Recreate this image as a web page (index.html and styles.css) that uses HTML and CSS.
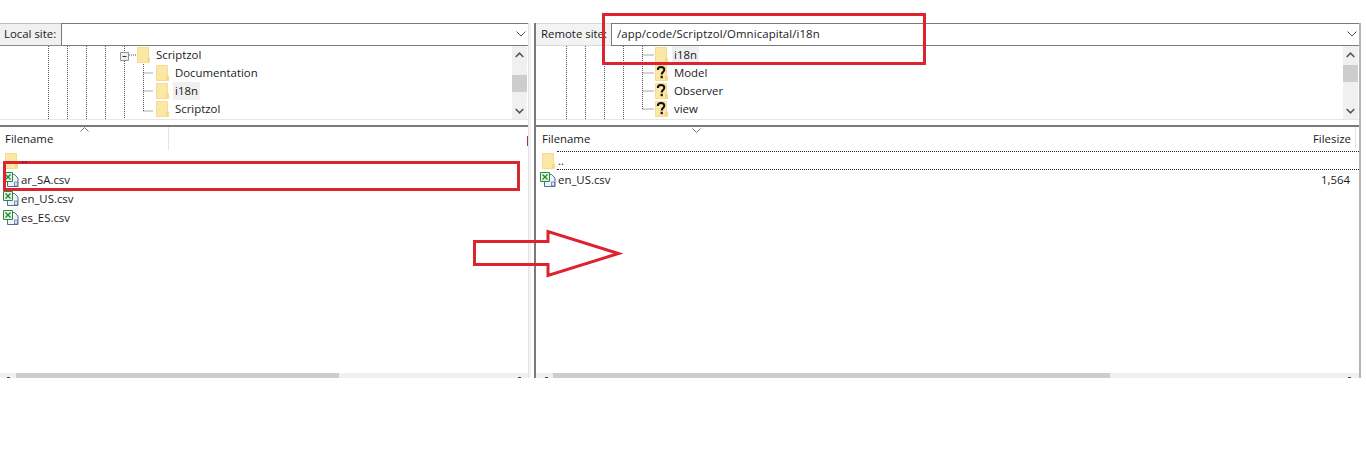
FILE: index.html
```html
<!DOCTYPE html>
<html lang="en">
<head>
<meta charset="utf-8">
<title>FileZilla site panes</title>
<link rel="stylesheet" href="styles.css">
</head>
<body>
<svg class="defs" width="0" height="0" aria-hidden="true">
  <defs>
    <symbol id="folder" viewBox="0 0 13 16">
      <path d="M.5.5h11v10.500h1v4.500H.5z" fill="#fce8a4" stroke="#f2dc96"/>
      <path d="M10 11h2.500v4.500H10z" fill="#f8da7e"/>
    </symbol>
    <symbol id="unknown" viewBox="0 0 13 16">
      <path d="M.5.5h11v10.500h1v4.500H.5z" fill="#fce8a4" stroke="#f2dc96"/>
      <path d="M10 11h2.500v4.500H10z" fill="#f8da7e"/>
      <path d="M2.800 5C2.800 3 4.300 2 6 2c1.900 0 3.300 1 3.300 2.700 0 2.300-2.600 2.300-2.600 4.800" fill="none" stroke="#111" stroke-width="2"/>
      <path d="M5.600 10.800h2.200v2.400H5.600z" fill="#111"/>
    </symbol>
    <symbol id="sheet" viewBox="0 0 16 15">
      <path d="M4.500 2.500h7l3.500 3.500v8.500H4.500z" fill="#eef4fa" stroke="#4f6f96"/>
      <path d="M11.500 10h3v4h-3z" fill="#d5e4f2" stroke="#4f6f96" stroke-width=".7"/>
      <path d="M.5.500h9v9h-9z" fill="#e6f3e2" stroke="#2a8a3a"/>
      <path d="M2.500 2.500l5 5M7.500 2.500l-5 5" stroke="#1f8a35" stroke-width="1.300"/>
    </symbol>
  </defs>
</svg>

<main class="panes">
  <section class="pane pane-local">
    <header class="sitebar">
      <span class="site-label">Local site:</span>
      <div class="site-input">
        <span class="site-path"></span>
        <svg class="chev" width="10" height="6" viewBox="0 0 10 6"><path d="M.5.500L5 5 9.500.500" fill="none" stroke="#555"/></svg>
      </div>
    </header>
    <div class="tree">
      <svg class="guides" width="512" height="73" aria-hidden="true">
        <path d="M48.500 0v73M67.500 0v73M86.500 0v73M105.500 0v73M124.500 0v7M124.500 15v58M143.500 18v47M143.500 27h10M143.500 45h10M143.500 65h10M129 9h7" fill="none" stroke="#555" stroke-dasharray="1 1"/>
        <path d="M120.500 6.500h8v8h-8z" fill="#eef0f2" stroke="#8b95a0"/>
        <path d="M122.500 10.500h4" stroke="#333"/>
      </svg>
      <div class="tree-body">
        <div class="node node-a"><svg class="fi" width="13" height="16"><use href="#folder"/></svg><span class="name">Scriptzol</span></div>
        <div class="node node-b"><svg class="fi" width="13" height="16"><use href="#folder"/></svg><span class="name">Documentation</span></div>
        <div class="node node-b"><svg class="fi" width="13" height="16"><use href="#folder"/></svg><span class="name sel">i18n</span></div>
        <div class="node node-b"><svg class="fi" width="13" height="16"><use href="#folder"/></svg><span class="name">Scriptzol</span></div>
      </div>
      <div class="vscroll">
        <svg class="arrow" width="9" height="6" viewBox="0 0 9 6"><path d="M.700 5L4.500 1.200 8.300 5" fill="none" stroke="#555" stroke-width="1.600"/></svg>
        <div class="thumb thumb-l"></div>
        <svg class="arrow" width="9" height="6" viewBox="0 0 9 6"><path d="M.700 1L4.500 4.800 8.300 1" fill="none" stroke="#555" stroke-width="1.600"/></svg>
      </div>
    </div>
    <div class="gap"></div>
    <div class="list">
      <div class="list-head">
        <span class="col-name col-sep">Filename</span>
        <span class="col-end"></span>
        <svg class="sort sort-l" width="9" height="5" viewBox="0 0 9 5"><path d="M.500 4.500L4.500.500l4 4" fill="none" stroke="#777"/></svg>
      </div>
      <div class="rows">
        <div class="row"><svg class="fi updir" width="13" height="16"><use href="#folder"/></svg><span class="fname dots dots-over">..</span></div>
        <div class="row"><svg class="fi" width="16" height="15"><use href="#sheet"/></svg><span class="fname">ar_SA.csv</span></div>
        <div class="row"><svg class="fi" width="16" height="15"><use href="#sheet"/></svg><span class="fname">en_US.csv</span></div>
        <div class="row"><svg class="fi" width="16" height="15"><use href="#sheet"/></svg><span class="fname">es_ES.csv</span></div>
      </div>
      <div class="hscroll hscroll-l"><div class="hthumb"></div></div>
    </div>
  </section>

  <div class="splitter"></div>

  <section class="pane pane-remote">
    <header class="sitebar">
      <span class="site-label site-label-r">Remote site:</span>
      <div class="site-input">
        <span class="site-path">/app/code/Scriptzol/Omnicapital/i18n</span>
        <svg class="chev" width="10" height="6" viewBox="0 0 10 6"><path d="M.500.500L5 5 9.500.500" fill="none" stroke="#555"/></svg>
      </div>
    </header>
    <div class="tree">
      <svg class="guides" width="512" height="73" aria-hidden="true">
        <path d="M30.500 0v73M49.500 0v73M68.500 0v73M87.500 0v73M106.500 0v63M106.500 9h11M106.500 27h11M106.500 45h11M106.500 63h11" fill="none" stroke="#555" stroke-dasharray="1 1"/>
      </svg>
      <div class="tree-body">
        <div class="node node-r"><svg class="fi" width="13" height="16"><use href="#folder"/></svg><span class="name sel">i18n</span></div>
        <div class="node node-r"><svg class="fi" width="13" height="16"><use href="#unknown"/></svg><span class="name">Model</span></div>
        <div class="node node-r"><svg class="fi" width="13" height="16"><use href="#unknown"/></svg><span class="name">Observer</span></div>
        <div class="node node-r"><svg class="fi" width="13" height="16"><use href="#unknown"/></svg><span class="name">view</span></div>
      </div>
      <div class="vscroll">
        <svg class="arrow" width="9" height="6" viewBox="0 0 9 6"><path d="M.700 5L4.500 1.200 8.300 5" fill="none" stroke="#555" stroke-width="1.600"/></svg>
        <div class="thumb thumb-r"></div>
        <svg class="arrow" width="9" height="6" viewBox="0 0 9 6"><path d="M.700 1L4.500 4.800 8.300 1" fill="none" stroke="#555" stroke-width="1.600"/></svg>
      </div>
    </div>
    <div class="gap"></div>
    <div class="list">
      <div class="list-head">
        <span class="col-name">Filename</span>
        <span class="col-size">Filesize</span>
        <svg class="sort sort-r" width="9" height="5" viewBox="0 0 9 5"><path d="M.500.500l4 4 4-4" fill="none" stroke="#777"/></svg>
      </div>
      <div class="rows">
        <div class="row"><svg class="fi updir" width="13" height="16"><use href="#folder"/></svg><span class="fname dots focus">..</span></div>
        <div class="row"><svg class="fi" width="16" height="15"><use href="#sheet"/></svg><span class="fname">en_US.csv</span><span class="fsize">1,564</span></div>
      </div>
      <div class="hscroll hscroll-r"><div class="hthumb"></div></div>
    </div>
  </section>
</main>

<div class="mark mark-path"></div>
<div class="mark mark-file"></div>
<svg class="mark-arrow" width="154" height="52" viewBox="0 0 154 52" aria-hidden="true">
  <path d="M1.500 13.500H75V3.500L145.500 25.500 75 47.500V36.500H1.500z" fill="none" stroke="#dc2430" stroke-width="3"/>
</svg>
</body>
</html>
```
FILE: styles.css
```css
* { box-sizing: border-box; }
html, body { margin: 0; padding: 0; height: 455px; overflow: hidden; background: #fff; }
body { position: relative; font: 11.4px/18px "Open Sans", "Noto Sans", "Liberation Sans", sans-serif; color: #1a1a1a; }
.defs { position: absolute; }

.panes { display: flex; width: 1361px; padding-top: 23px; }
.pane { display: flex; flex-direction: column; height: 355px; }
.pane-local { width: 528px; }
.pane-remote { flex: 1; border-left: 2px solid #7a7a7a; border-right: 2px solid #b5b5b5; }
.splitter { width: 6px; background: linear-gradient(90deg, #e4e4e4 0 1px, #f3f3f3 1px 3px, #fff 3px 6px); }

.sitebar { display: flex; height: 23px; flex: none; }
.site-label { width: 61px; padding: 1px 0 0 4px; background: #f0f0f0; border-top: 1px solid #bdbdbd; border-bottom: 1px solid #8a8a8a; white-space: nowrap; }
.site-label-r { width: 75px; background: #f3f3f3; padding-left: 5px; border-top-color: #d8d8d8; border-bottom-color: #d8d8d8; overflow: hidden; }
.site-input { flex: 1; display: flex; align-items: center; justify-content: space-between; border: 1px solid #7a7a7a; border-right-width: 0; padding: 0 2px 2px 5px; min-width: 0; }
.site-path { letter-spacing: .1px; }
.chev { flex: none; }

.tree { position: relative; display: flex; height: 74px; flex: none; border-bottom: 1px solid #e6e6e6; overflow: hidden; }
.guides { position: absolute; left: 0; top: 0; }
.tree-body { position: relative; flex: 1; min-width: 0; }
.node { display: flex; align-items: center; height: 18px; }
.node-a { padding-left: 137px; }
.node-b { padding-left: 156px; }
.node-r { padding-left: 119px; }
.name { margin-left: 4px; padding: 0 2px; line-height: 18px; }
.sel { background: #f0f0f0; }
.fi { flex: none; display: block; }

.vscroll { width: 15px; flex: none; margin-right: 1px; background: #f0f0f0; display: flex; flex-direction: column; align-items: center; padding: 6px 0 5px; }
.thumb { width: 15px; background: #cdcdcd; height: 17px; }
.thumb-l { margin: 17px 0 auto; }
.thumb-r { margin: 7px 0 auto; }
.arrow { flex: none; }

.gap { height: 5px; flex: none; }
.list { flex: 1; display: flex; flex-direction: column; min-height: 0; border-top: 2px solid #7a7a7a; position: relative; }
.list-head { position: relative; display: flex; justify-content: space-between; height: 24px; flex: none; padding: 3px 0 0 5px; }
.pane-remote .list-head { padding-left: 6px; }
.col-name { line-height: 17px; }
.col-sep::after { content: ""; position: absolute; left: 168px; top: 0; bottom: 1px; width: 1px; background: #e5e5e5; }
.col-end { width: 1px; height: 10px; margin-top: 6px; background: #a8323a; }
.col-size { padding-right: 4px; margin-right: 3px; border-right: 1px solid #e5e5e5; line-height: 17px; height: 21px; margin-top: -3px; padding-top: 3px; }
.sort { position: absolute; top: 0; }
.sort-l { left: 80px; }
.sort-r { left: 156px; top: 1px; }

.rows { flex: 1; min-height: 0; }
.row { display: flex; align-items: center; height: 19px; padding-left: 3px; }
.pane-remote .row { padding-left: 4px; }
.updir { margin-left: 2px; }
.fname { margin-left: 2px; }
.dots { margin-left: 3px; height: 19px; }
.dots-over { position: relative; z-index: 1; line-height: 16px; }
.pane-remote .dots { margin-left: 2px; padding-left: 1px; }
.focus { flex: 1; border-top: 1px dotted #222; border-bottom: 1px dotted #222; line-height: 17px; }
.fsize { margin-left: auto; margin-right: 9px; }

.hscroll { position: relative; height: 5px; flex: none; background: #f0f0f0; }
.hscroll::before, .hscroll::after { content: ""; position: absolute; bottom: 0; width: 3px; height: 1px; background: #444; }
.hscroll-l::before { left: 7px; }
.hscroll-l::after { right: 7px; }
.hscroll-r::before { left: 9px; }
.hscroll-r::after { right: 8px; }
.hthumb { height: 100%; background: #cdcdcd; }
.hscroll-l .hthumb { margin-left: 16px; width: 323px; }
.hscroll-r .hthumb { margin-left: 17px; width: 557px; }

.mark { position: absolute; border: 3px solid #dc2430; }
.mark-path { left: 602px; top: 13px; width: 324px; height: 52px; }
.mark-file { left: 3px; top: 161px; width: 517px; height: 30px; }
.mark-arrow { position: absolute; left: 473px; top: 228px; }
```
